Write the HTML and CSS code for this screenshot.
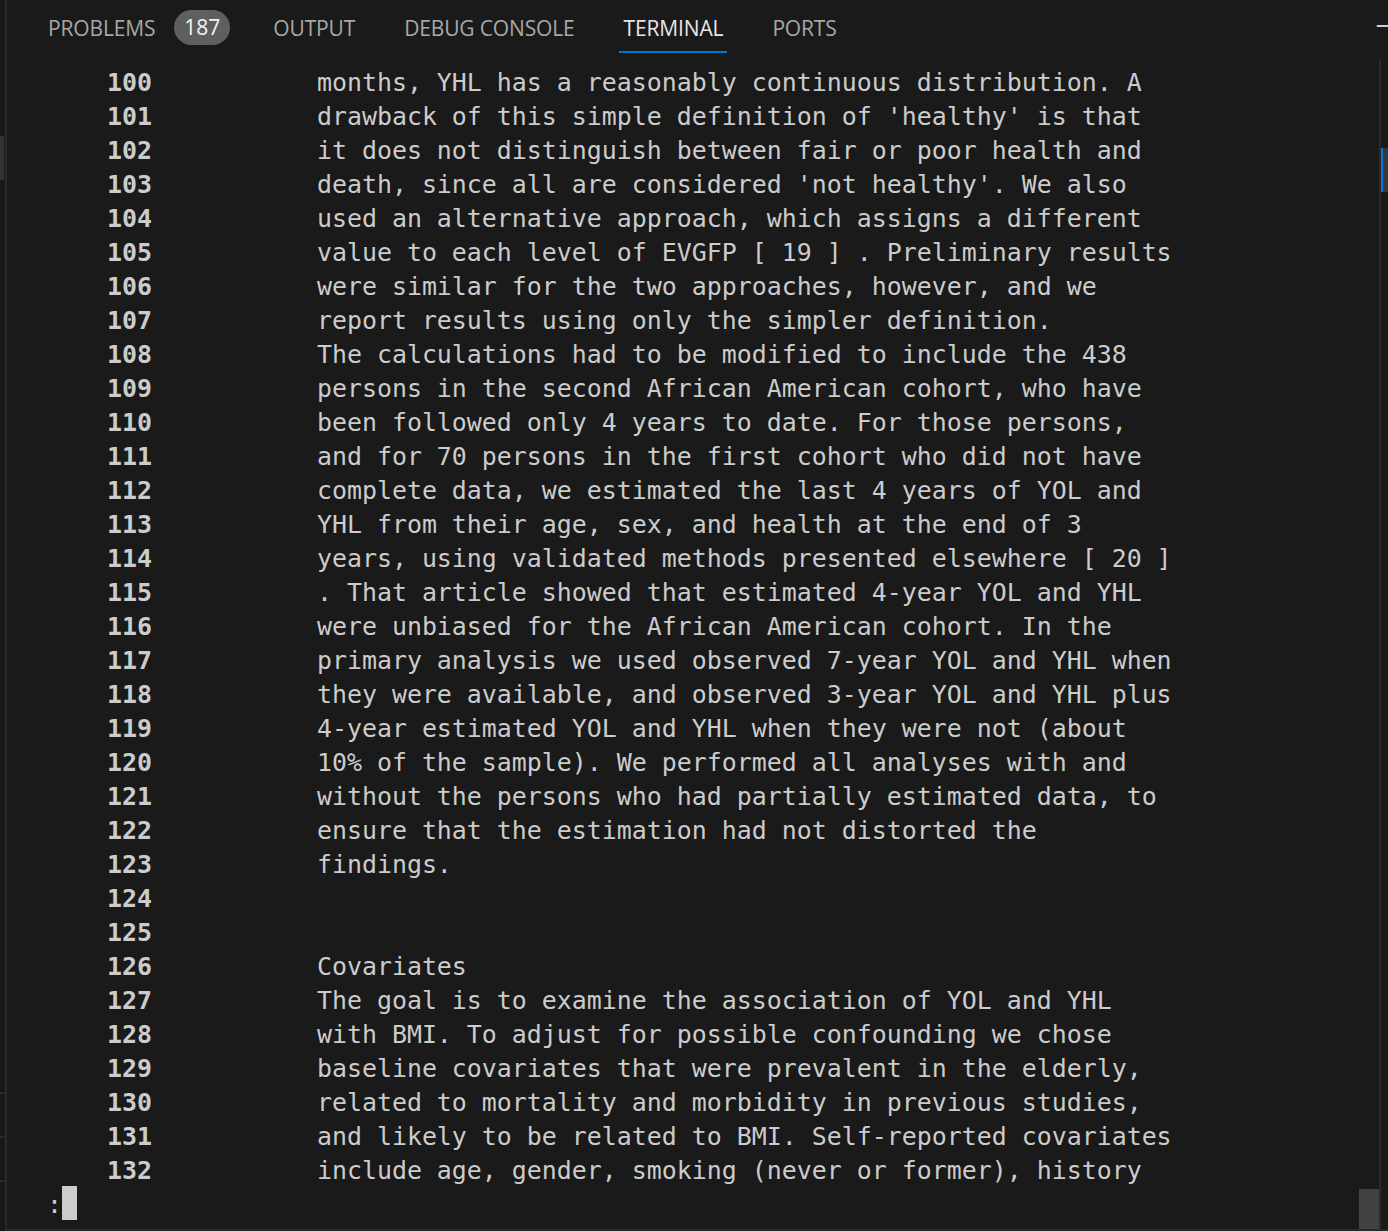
FILE: index.html
```html
<!DOCTYPE html>
<html>
<head>
<meta charset="utf-8">
<link rel="stylesheet" href="styles.css">
</head>
<body>
<div class="window">
  <div class="edge-left"><div class="edge-block"></div><div class="edge-tick t1"></div><div class="edge-tick t2"></div><div class="edge-tick t3"></div></div>
  <div class="panel">
    <div class="tabbar">
      <div class="tab first">PROBLEMS<span class="badge">187</span></div>
      <div class="tab">OUTPUT</div>
      <div class="tab">DEBUG CONSOLE</div>
      <div class="tab active">TERMINAL</div>
      <div class="tab">PORTS</div>
      <div class="maximize"></div>
    </div>
    <div class="term-wrap">
      <div class="term">
<div class="row"><span class="ln">    100</span>           months, YHL has a reasonably continuous distribution. A</div>
<div class="row"><span class="ln">    101</span>           drawback of this simple definition of 'healthy' is that</div>
<div class="row"><span class="ln">    102</span>           it does not distinguish between fair or poor health and</div>
<div class="row"><span class="ln">    103</span>           death, since all are considered 'not healthy'. We also</div>
<div class="row"><span class="ln">    104</span>           used an alternative approach, which assigns a different</div>
<div class="row"><span class="ln">    105</span>           value to each level of EVGFP [ 19 ] . Preliminary results</div>
<div class="row"><span class="ln">    106</span>           were similar for the two approaches, however, and we</div>
<div class="row"><span class="ln">    107</span>           report results using only the simpler definition.</div>
<div class="row"><span class="ln">    108</span>           The calculations had to be modified to include the 438</div>
<div class="row"><span class="ln">    109</span>           persons in the second African American cohort, who have</div>
<div class="row"><span class="ln">    110</span>           been followed only 4 years to date. For those persons,</div>
<div class="row"><span class="ln">    111</span>           and for 70 persons in the first cohort who did not have</div>
<div class="row"><span class="ln">    112</span>           complete data, we estimated the last 4 years of YOL and</div>
<div class="row"><span class="ln">    113</span>           YHL from their age, sex, and health at the end of 3</div>
<div class="row"><span class="ln">    114</span>           years, using validated methods presented elsewhere [ 20 ]</div>
<div class="row"><span class="ln">    115</span>           . That article showed that estimated 4-year YOL and YHL</div>
<div class="row"><span class="ln">    116</span>           were unbiased for the African American cohort. In the</div>
<div class="row"><span class="ln">    117</span>           primary analysis we used observed 7-year YOL and YHL when</div>
<div class="row"><span class="ln">    118</span>           they were available, and observed 3-year YOL and YHL plus</div>
<div class="row"><span class="ln">    119</span>           4-year estimated YOL and YHL when they were not (about</div>
<div class="row"><span class="ln">    120</span>           10% of the sample). We performed all analyses with and</div>
<div class="row"><span class="ln">    121</span>           without the persons who had partially estimated data, to</div>
<div class="row"><span class="ln">    122</span>           ensure that the estimation had not distorted the</div>
<div class="row"><span class="ln">    123</span>           findings.</div>
<div class="row"><span class="ln">    124</span></div>
<div class="row"><span class="ln">    125</span></div>
<div class="row"><span class="ln">    126</span>           Covariates</div>
<div class="row"><span class="ln">    127</span>           The goal is to examine the association of YOL and YHL</div>
<div class="row"><span class="ln">    128</span>           with BMI. To adjust for possible confounding we chose</div>
<div class="row"><span class="ln">    129</span>           baseline covariates that were prevalent in the elderly,</div>
<div class="row"><span class="ln">    130</span>           related to mortality and morbidity in previous studies,</div>
<div class="row"><span class="ln">    131</span>           and likely to be related to BMI. Self-reported covariates</div>
<div class="row"><span class="ln">    132</span>           include age, gender, smoking (never or former), history</div>
<div class="row">:<span class="cursor"> </span></div>
      </div>
      <div class="scrollbar"><div class="thumb"></div></div>
      <div class="ruler"><div class="ruler-mark"></div></div>
    </div>
    <div class="bottom-line"></div>
  </div>
</div>
</body>
</html>
```

FILE: styles.css
```css
html, body {
  margin: 0;
  padding: 0;
  background: #181818;
}
body {
  width: 1388px;
  height: 1231px;
  overflow: hidden;
}
.window {
  display: flex;
  height: 1231px;
}
.edge-left {
  position: relative;
  width: 5px;
  flex: none;
  background: #181818;
}
.edge-block {
  position: absolute;
  left: 0;
  top: 136px;
  width: 4px;
  height: 44px;
  background: #313136;
}
.edge-tick {
  position: absolute;
  left: 0;
  width: 5px;
  height: 2px;
  background: #2b2b2b;
}
.t1 { top: 1092px; }
.t2 { top: 1136px; }
.t3 { top: 1180px; }
.panel {
  flex: 1;
  display: flex;
  flex-direction: column;
  border-left: 2px solid #2b2b2b;
  background: #1a1a1a;
  min-width: 0;
}
.tabbar {
  position: relative;
  height: 64px;
  flex: none;
  display: flex;
  align-items: flex-start;
  padding-left: 17px;
  font-family: "Open Sans", "Noto Sans", sans-serif;
  font-size: 21px;
  color: #a8a8a8;
}
.tab {
  position: relative;
  display: flex;
  align-items: center;
  height: 54px;
  padding: 2px 24px 0;
  margin-right: 1px;
  white-space: nowrap;
  letter-spacing: -0.15px;
  box-sizing: border-box;
}
.tab.first {
  padding-right: 18px;
}
.tab.active {
  color: #e6e6e6;
}
.tab.active::after {
  content: "";
  position: absolute;
  left: 19px;
  right: 20px;
  bottom: 1px;
  height: 2px;
  background: #0078d4;
}
.badge {
  display: inline-flex;
  align-items: center;
  justify-content: center;
  margin-left: 19px;
  margin-top: -2px;
  width: 56px;
  height: 35px;
  border-radius: 18px;
  background: #5f5f5f;
  color: #f4f4f4;
  font-size: 21px;
  letter-spacing: 0;
}
.maximize {
  position: absolute;
  right: 0;
  top: 25px;
  width: 11px;
  height: 2px;
  background: #cfcfcf;
  border-left: 1px solid #2d3fb8;
}
.term-wrap {
  position: relative;
  flex: 1;
  display: flex;
  min-height: 0;
}
.term {
  flex: 1;
  padding-left: 40px;
  font-family: "DejaVu Sans Mono", "Liberation Mono", monospace;
  font-size: 24.92px;
  color: #cccccc;
}
.row {
  height: 34px;
  line-height: 38px;
  white-space: pre;
}
.ln {
  font-weight: bold;
}
.cursor {
  display: inline-block;
  width: 15px;
  height: 34px;
  vertical-align: top;
  background: #cccccc;
}
.scrollbar {
  position: relative;
  width: 2px;
  flex: none;
  margin-right: 7px;
  background: #2b2b2b;
  margin-top: -4px;
}
.thumb {
  position: absolute;
  right: 2px;
  bottom: 0;
  width: 20px;
  height: 40px;
  background: #424242;
}
.ruler {
  position: absolute;
  right: 0;
  top: 84px;
  width: 7px;
  height: 44px;
}
.ruler-mark {
  width: 7px;
  height: 44px;
  background: #383838;
  border-left: 2px solid #0078d4;
  box-sizing: border-box;
}
.bottom-line {
  height: 2px;
  background: #2b2b2b;
  flex: none;
}
```
